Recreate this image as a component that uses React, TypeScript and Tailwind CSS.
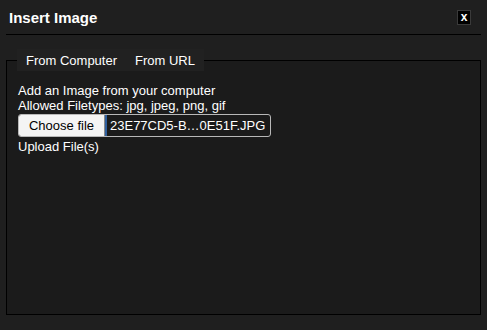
import React from "react";

export default function App() {
  return (
    <div
      className="w-[487px] h-[330px] bg-[#1f1f1f] text-white overflow-hidden"
      style={{ fontFamily: '"Liberation Sans", Arial, sans-serif' }}
    >
      <div className="flex items-center justify-between h-[35px] mx-[6px] border-b border-black pl-[3px] pr-[10px]">
        <div className="text-[15px] font-bold leading-none pt-[1px]">Insert Image</div>
        <div className="w-[14px] h-[15px] bg-black border border-[#3a3a3a] flex items-center justify-center text-[12px] font-bold leading-none pb-[1px] ml-[1px]">
          x
        </div>
      </div>
      <fieldset className="mx-[6px] mt-[14px] h-[266px] border border-black bg-[#1b1b1b] px-[11px] pb-0 pt-0">
        <legend className="ml-[-1px] bg-[#212121] pl-[9px] pr-[9px] h-[22px] flex items-center gap-[18px] text-[13px] leading-none">
          <span>From Computer</span>
          <span>From URL</span>
        </legend>
        <div className="pt-[12px] text-[13px] leading-[15px]">
          <div>Add an Image from your computer</div>
          <div>Allowed Filetypes: jpg, jpeg, png, gif</div>
          <div className="mt-[1px] w-[253px] h-[23px] flex items-stretch rounded-[3px] border border-[#b8b8b8] overflow-hidden bg-[#1b1b1b]">
            <div className="w-[86px] bg-[#f4f4f4] border-r border-[#8a8a8a] text-black text-[13px] flex items-center justify-center">
              Choose file
            </div>
            <div className="w-[2px] bg-[#2f5f9e]" />
            <div className="flex-1 flex items-center pl-[3px] text-[13px] whitespace-nowrap">
              23E77CD5-B…0E51F.JPG
            </div>
          </div>
          <div className="mt-[2px]">Upload File(s)</div>
        </div>
      </fieldset>
    </div>
  );
}
